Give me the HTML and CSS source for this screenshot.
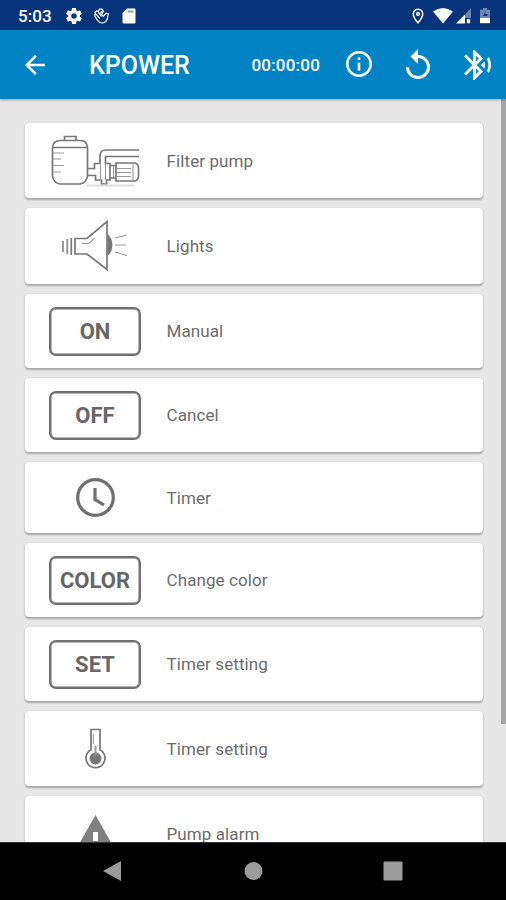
FILE: index.html
```html
<!DOCTYPE html>
<html lang="en">
<head>
<meta charset="utf-8">
<title>KPOWER</title>
<link rel="stylesheet" href="styles.css">
</head>
<body>
<div class="screen">
  <div class="status">
    <span class="clock">5:03</span>
    <svg class="st-gear" viewBox="2 2 20 20"><path d="M19.43 12.98c.04-.32.07-.64.07-.98s-.03-.66-.07-.98l2.11-1.65c.19-.15.24-.42.12-.64l-2-3.46c-.12-.22-.39-.3-.61-.22l-2.49 1c-.52-.4-1.08-.73-1.69-.98l-.38-2.65C14.46 2.18 14.25 2 14 2h-4c-.25 0-.46.18-.49.42l-.38 2.65c-.61.25-1.17.59-1.69.98l-2.49-1c-.23-.09-.49 0-.61.22l-2 3.46c-.13.22-.07.49.12.64l2.11 1.65c-.04.32-.07.65-.07.98s.03.66.07.98l-2.11 1.65c-.19.15-.24.42-.12.64l2 3.46c.12.22.39.3.61.22l2.49-1c.52.4 1.08.73 1.69.98l.38 2.65c.03.24.24.42.49.42h4c.25 0 .46-.18.49-.42l.38-2.65c.61-.25 1.17-.59 1.69-.98l2.49 1c.23.09.49 0 .61-.22l2-3.46c.12-.22.07-.49-.12-.64l-2.11-1.65zM12 15.5c-1.93 0-3.500-1.570-3.500-3.500s1.570-3.500 3.500-3.500 3.500 1.570 3.500 3.500-1.570 3.500-3.500 3.500z"/></svg>
    <svg class="st-hand" viewBox="0 0 16 16"><path d="M2.200 9.500 1 7.300 2.300 6.400 1.300 4.300 3.300 3 4.700 3.600 6 1.200 8.500 1.200 10 3 8 6.500 9.800 8.300 12.500 5.200 14.800 6 13.800 11Q12 15 8.500 15Q4.500 14.500 2.200 9.500ZM2.800 6.400 6.300 10.500M4.500 3.800 8 8.500M8.300 3 6.800 5.500"/></svg>
    <svg class="st-card" viewBox="0 0 14 16"><path d="M5 .5h7.300q1.200 0 1.200 1.200v12.600q0 1.200-1.200 1.200H1.700q-1.200 0-1.200-1.200V5z"/><path class="slots" d="M5.500 2.500h6v2h-6z"/></svg>
    <span class="spacer"></span>
    <svg class="st-pin" viewBox="0 0 12 16"><path d="M6 1.200a4.700 4.700 0 0 0-4.700 4.700C1.300 9.400 6 14.800 6 14.800s4.700-5.400 4.700-8.900A4.700 4.700 0 0 0 6 1.200z"/><circle cx="6" cy="5.900" r="1.300"/></svg>
    <svg class="st-wifi" viewBox="0 0 20 16"><path d="M0 3.500Q10-3.500 20 3.500L10 15.500z"/></svg>
    <svg class="st-cell" viewBox="0 0 16 16"><path class="dim" d="M15 0v10H5.500z"/><path d="M0 15.500 9 6.500v9zM10.800 11.300h3.400v4h-3.400z"/></svg>
    <svg class="st-batt" viewBox="0 0 10 16"><path class="dim" d="M3 0h4v1.800h3V10H0V1.800h3zM5.500 3.500 3 8h4L7.500 6H5z" fill-rule="evenodd"/><path d="M0 10h10v5.200H0z"/></svg>
  </div>
  <header class="bar">
    <svg class="back" viewBox="4 4 16 16"><path d="M20 11H7.830l5.590-5.590L12 4l-8 8 8 8 1.410-1.410L7.830 13H20v-2z"/></svg>
    <h1 class="title">KPOWER</h1>
    <span class="spacer"></span>
    <span class="counter">00:00:00</span>
    <svg class="info" viewBox="2 2 20 20"><path d="M11 7h2v2h-2zm0 4h2v6h-2zm1-9C6.480 2 2 6.480 2 12s4.480 10 10 10 10-4.480 10-10S17.520 2 12 2zm0 18c-4.410 0-8-3.590-8-8s3.590-8 8-8 8 3.590 8 8-3.590 8-8 8z"/></svg>
    <svg class="replay" viewBox="4 1 16 20"><path d="M12 5V1L7 6l5 5V7c3.310 0 6 2.690 6 6s-2.690 6-6 6-6-2.690-6-6H4c0 4.420 3.580 8 8 8s8-3.580 8-8-3.580-8-8-8z"/></svg>
    <svg class="bt" viewBox="3 2 18 20"><path d="M14.240 12.010l2.320 2.320c.28-.72.44-1.510.44-2.330 0-.82-.16-1.590-.43-2.310l-2.330 2.320zm5.290-5.300l-1.260 1.260c.63 1.210.98 2.570.98 4.020s-.36 2.820-.98 4.020l1.200 1.200c.97-1.540 1.540-3.360 1.540-5.310-.01-1.890-.55-3.670-1.480-5.190zm-3.820 1L10 2H9v7.590L4.410 5 3 6.410 8.590 12 3 17.590 4.410 19 9 14.410V22h1l5.710-5.710-4.300-4.290 4.300-4.290zM11 5.830l1.880 1.880L11 9.590V5.830zm1.880 10.460L11 18.170v-3.760l1.880 1.880z"/></svg>
  </header>
  <main class="content">
    <div class="list">
      <div class="card h75"><div class="pic">
        <svg class="line pump" viewBox="0 0 92 56">
          <path d="M15.500 7.500v-4h11.500v4M11.500 7.500h19.500q7.500 0 7.500 7.500V43q-1 7-7.500 8H11Q4.500 50 3.500 43V15q0-7.500 8-7.500zM3.500 14.500h35"/>
          <path class="thin" d="M4 20h11M4 26h8M4 32.500h11M4 39h8"/>
          <path d="M39 35.500h6.500V30.500h5.500V23q0-6 6-6H90M90 23.500H56.500V30.500h4.500V47h-3.500v4h-5v-4h-6V42.500H39"/>
          <path class="thin" d="M51.500 30.500V47M56.500 30.500V47M64.500 33v12M84 31v16M68 35.500h14M68 39.500h14M68 43.500h14"/>
          <path d="M61 32.500h6M61 45h6M67 30h19q3.500 1 3.500 5v8q0 4-3.500 5H67z"/>
          <path class="floor" d="M37 52.500h48"/>
        </svg></div><span class="label">Filter pump</span></div>
      <div class="card h76"><div class="pic">
        <svg class="line horn" viewBox="0 0 92 56">
          <path d="M26 20.500h12L58 3.500v48L38 36H26z"/>
          <path class="solid" d="M59 17q4 3.500 4 10t-4 10z"/>
          <path d="M22.300 20v17"/><path class="mid" d="M18.300 21v15M14 23v11"/>
          <path class="thin" d="M33 25.500h6.500l6-5M66 20l12-3M66 27h11M66 34l12 3.500"/>
        </svg></div><span class="label">Lights</span></div>
      <div class="card h74"><div class="pic"><span class="key">ON</span></div><span class="label">Manual</span></div>
      <div class="card h74"><div class="pic"><span class="key">OFF</span></div><span class="label">Cancel</span></div>
      <div class="card h71"><div class="pic">
        <svg class="timer" viewBox="0 0 40 40"><circle cx="20.500" cy="19.500" r="17.800"/><path d="M20 10v11.500l9 5.500"/></svg></div><span class="label">Timer</span></div>
      <div class="card h74"><div class="pic"><span class="key">COLOR</span></div><span class="label">Change color</span></div>
      <div class="card h74"><div class="pic"><span class="key">SET</span></div><span class="label">Timer setting</span></div>
      <div class="card h75"><div class="pic">
        <svg class="line thermo" viewBox="0 0 22 42"><path d="M7 1.500h9v20.300a9.500 9.500 0 1 1-9 0z"/><circle class="solid" cx="11.500" cy="30.500" r="5.500"/><path class="mid" d="M11.500 18v10"/><path class="thin" d="M9.300 6v10"/></svg></div><span class="label">Timer setting</span></div>
      <div class="card h76"><div class="pic">
        <svg class="alarm" viewBox="0 0 44 38"><path fill-rule="evenodd" d="M22.500 0 44 38H1zM20 17v9h5v-9zM20 29v4h5v-4z"/></svg></div><span class="label">Pump alarm</span></div>
    </div>
    <div class="scrollbar"></div>
  </main>
  <nav class="nav">
    <svg viewBox="0 0 20 22"><path d="M1 11 19 1v20z"/></svg>
    <svg viewBox="0 0 20 22"><circle cx="10.500" cy="11" r="9"/></svg>
    <svg viewBox="0 0 20 22"><rect x=".5" y="1.500" width="19" height="19" rx="1"/></svg>
  </nav>
</div>
</body>
</html>
```
FILE: styles.css
```css
* { box-sizing: border-box; }
body { margin: 0; font-family: Roboto, "Liberation Sans", sans-serif; }
svg { display: block; flex: none; }
.screen { width: 506px; height: 900px; display: flex; flex-direction: column; overflow: hidden; background: #e7e7e7; }
.spacer { flex: 1; }

.status { height: 30px; flex: none; display: flex; align-items: center; padding: 1px 16px 0 18px; background: #08347b; color: #fff; }
.status svg { fill: #fff; }
.status .dim { opacity: .4; }
.status .slots { fill: #8a9cc0; }
.clock { font-size: 17px; font-weight: 500; width: 48px; letter-spacing: .1px; }
.st-gear { width: 16px; height: 16px; }
.status .st-hand { width: 17px; height: 16px; margin-left: 11px; fill: none; stroke: #fff; stroke-width: 1.2; }
.st-card { width: 14px; height: 16px; margin-left: 12px; }
.status .st-pin { width: 12px; height: 16px; fill: none; stroke: #fff; stroke-width: 1.5; }
.st-wifi { width: 20px; height: 16px; margin-left: 9px; }
.st-cell { width: 16px; height: 16px; margin-left: 3px; }
.st-batt { width: 10px; height: 16px; margin-left: 8px; }

.bar { height: 69px; flex: none; display: flex; align-items: center; padding: 0 15px 0 25px; background: #0283c6; color: #fff; position: relative; box-shadow: 0 1px 3px rgba(0,0,0,.3); }
.bar svg { fill: #fff; }
.back { width: 20px; height: 20px; }
.title { margin: 3px 0 0 44px; font-size: 25px; font-weight: 500; line-height: 30px; }
.counter { font-size: 17px; font-weight: 500; letter-spacing: .2px; }
.info { width: 26px; height: 26px; margin-left: 26px; margin-top: -1px; }
.replay { width: 24px; height: 30px; margin-left: 34px; margin-top: -2px; }
.bt { width: 27px; height: 30px; margin-left: 34px; }

.content { flex: 1; min-height: 0; overflow: hidden; display: flex; }
.list { flex: 1; padding: 24px 18px 0 25px; display: flex; flex-direction: column; gap: 10px; }
.scrollbar { width: 5px; height: 625px; background: #a6a6a6; }
.card { flex: none; display: flex; align-items: center; background: #fff; border-radius: 4px; box-shadow: 0 1.500px 2px rgba(0,0,0,.28), 0 0 1px rgba(0,0,0,.12); }
.h71 { height: 71px; }
.h74 { height: 74px; }
.h75 { height: 75px; }
.h76 { height: 76px; }
.pic { width: 92px; margin-left: 24px; display: flex; justify-content: center; }
.label { margin-left: 25.500px; font-size: 17px; color: #6c6c6c; letter-spacing: .1px; white-space: nowrap; }
.key { width: 92px; height: 49px; border: 2px solid #707070; box-shadow: inset 0 0 0 .5px #707070; border-radius: 7px; display: flex; align-items: center; justify-content: center; font-size: 22px; font-weight: 700; color: #666; }

.line { fill: none; stroke: #777; stroke-width: 1.700; }
.line .thin { stroke-width: 1.100; stroke: #999; }
.line .mid { stroke-width: 2; stroke: #999; }
.line .solid { fill: #777; stroke: #777; stroke-width: 1; }
.line .floor { stroke: #ddd; stroke-width: 2; }
.pump, .horn { width: 92px; height: 56px; }
.timer { width: 40px; height: 40px; fill: none; stroke: #6f6f6f; stroke-width: 3.200; }
.thermo { width: 22px; height: 42px; }
.alarm { width: 44px; height: 38px; fill: #808080; }

.nav { height: 58px; flex: none; background: #000; display: flex; align-items: center; justify-content: space-between; padding: 0 103px 2px 102px; border-top: 1px solid #333; }
.nav svg { width: 20px; height: 22px; fill: #9b9b9b; }
```
